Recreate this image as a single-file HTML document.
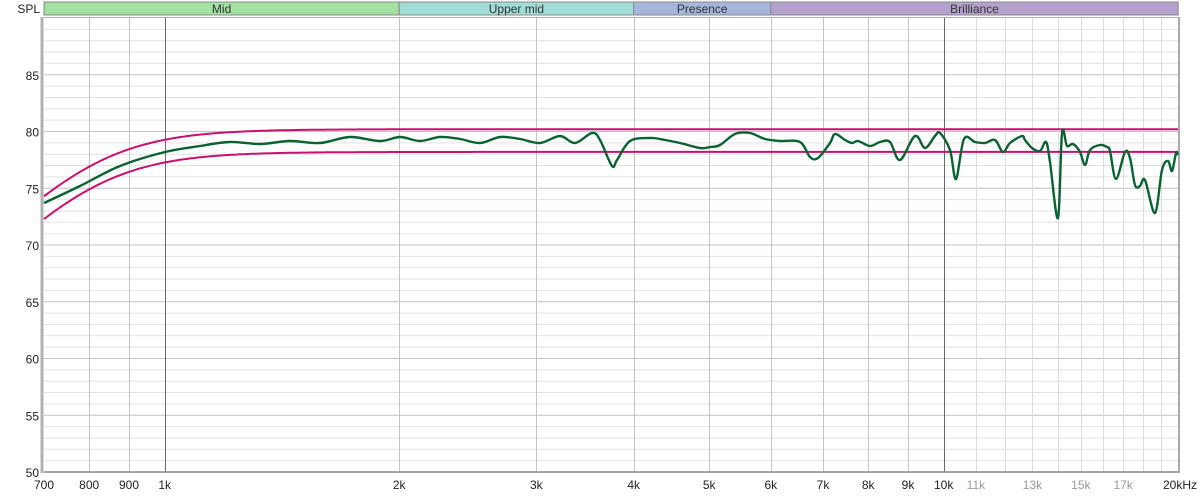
<!DOCTYPE html>
<html><head><meta charset="utf-8"><style>
html,body{margin:0;padding:0;background:#fff;width:1200px;height:496px;overflow:hidden}
svg{display:block;font-family:"Liberation Sans",sans-serif}
</style></head><body>
<svg id="s" width="1200" height="496" xmlns="http://www.w3.org/2000/svg"></svg>
<script>
const s=document.getElementById('s');
const X0=44,K=779,Y50=472,D=11.35;
const fx=f=>X0+K*Math.log10(f/700);
const dy=db=>Y50-(db-50)*D;
let h='';
const bands=[[700,2000,'Mid','#a3e1a3'],[2000,4000,'Upper mid','#a2dcd6'],[4000,6000,'Presence','#a5b5dc'],[6000,20000,'Brilliance','#b3a2cb']];
for(const b of bands){const a=fx(b[0]),e=fx(b[1]);h+=`<rect x="${a}" y="2" width="${e-a}" height="13" fill="${b[3]}" stroke="#8a8a8a" stroke-width="1"/><text x="${(a+e)/2}" y="13" font-size="12" text-anchor="middle" fill="#333">${b[2]}</text>`;}
h+=`<text x="40" y="13" font-size="12" text-anchor="end" fill="#222">SPL</text>`;
h+=`<rect x="44" y="17" width="1134" height="455" fill="#fff"/>`;
for(let d=51;d<=89;d++){const y=dy(d);h+=`<line x1="44" x2="1178" y1="${y}" y2="${y}" stroke="${d%5==0?'#c4c4c4':'#e2e2e2'}" stroke-width="1"/>`;}
let fs=[800,900,1000];for(let f=2000;f<20000;f+=1000)fs.push(f);
for(const f of fs){let c='#c4c4c4';if(f==1000||f==10000)c='#6a6a6a';if(f>10000)c='#dcdcdc';const x=Math.round(fx(f))+0.5;h+=`<line x1="${x}" x2="${x}" y1="17" y2="472" stroke="${c}" stroke-width="1"/>`;}
h+=`<line x1="42" y1="17" x2="42" y2="473" stroke="#b0b0b0" stroke-width="3"/><line x1="44" y1="17.5" x2="1178" y2="17.5" stroke="#b0b0b0"/><line x1="44" y1="472" x2="1179" y2="472" stroke="#888" stroke-width="1.5"/><line x1="1179" y1="17" x2="1179" y2="473" stroke="#aaa" stroke-width="2"/>`;
for(let d=50;d<=85;d+=5){h+=`<text x="39" y="${dy(d)+5}" font-size="12" text-anchor="end" fill="#222">${d}</text>`;}
const xl=[[700,'700'],[800,'800'],[900,'900'],[1000,'1k'],[2000,'2k'],[3000,'3k'],[4000,'4k'],[5000,'5k'],[6000,'6k'],[7000,'7k'],[8000,'8k'],[9000,'9k'],[10000,'10k'],[11000,'11k',1],[13000,'13k',1],[15000,'15k',1],[17000,'17k',1]];
for(const l of xl){h+=`<text x="${fx(l[0])}" y="489" font-size="12" text-anchor="middle" fill="${l[2]?'#999':'#222'}">${l[1]}</text>`;}
h+=`<text x="1197" y="489" font-size="12" text-anchor="end" fill="#222">20kHz</text>`;
function lim(top){let p=[];for(let x=44;x<=1178;x+=2){const f=700*Math.pow(10,(x-44)/K);const v=top-10*Math.log10(1+Math.pow(815/f,7));p.push(x+','+dy(v).toFixed(1));}return p.join(' ');}
h+=`<polyline points="${lim(80.2)}" fill="none" stroke="#c8106e" stroke-width="2"/>`;
h+=`<polyline points="${lim(78.2)}" fill="none" stroke="#c8106e" stroke-width="2"/>`;
const g="44,203 80,186 120,166 165,152 200,146 230,142 260,144 290,141 320,143 350,137 380,141 400,137 420,141 440,137 460,139 480,143 500,137 520,139 540,143 560,136 575,143 592,133 600,140 612,166 617,160 630,141 650,138 665,140 680,143 700,148 710,147 720,145 735,134 750,133 765,139 780,141 800,142 810,157 818,158 830,143 835,134 845,140 852,143 858,141 870,146 880,142 890,142 900,160 915,136 925,148 935,136 940,133 950,150 956,179 964,139 975,142 985,143 995,140 1003,152 1010,143 1022,136 1025,140 1032,148 1040,151 1046,142 1050,162 1058,218 1062,133 1067,146 1073,144 1080,152 1085,165 1090,150 1100,145 1107,147 1110,151 1116,179 1125,152 1130,158 1135,185 1140,186 1145,180 1155,213 1162,170 1168,161 1172,171 1176,153 1178,155";
const P=g.split(' ').map(t=>t.split(',').map(Number));
let d=`M${P[0][0]},${P[0][1]}`;
for(let i=0;i<P.length-1;i++){const p0=P[Math.max(0,i-1)],p1=P[i],p2=P[i+1],p3=P[Math.min(P.length-1,i+2)];
const c1=[p1[0]+(p2[0]-p0[0])/6,p1[1]+(p2[1]-p0[1])/6],c2=[p2[0]-(p3[0]-p1[0])/6,p2[1]-(p3[1]-p1[1])/6];
d+=` C${c1[0].toFixed(1)},${c1[1].toFixed(1)} ${c2[0].toFixed(1)},${c2[1].toFixed(1)} ${p2[0]},${p2[1]}`;}
h+=`<path d="${d}" fill="none" stroke="#0a6232" stroke-width="2.4" stroke-linejoin="round"/>`;
s.innerHTML=h;
</script>
</body></html>
